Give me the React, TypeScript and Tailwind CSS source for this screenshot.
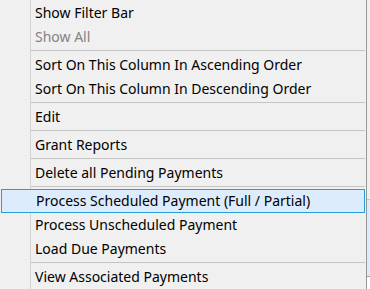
import React from 'react';

type Entry =
  | { kind: 'item'; label: string; disabled?: boolean; active?: boolean }
  | { kind: 'sep' };

const entries: Entry[] = [
  { kind: 'item', label: 'Show Filter Bar' },
  { kind: 'item', label: 'Show All', disabled: true },
  { kind: 'sep' },
  { kind: 'item', label: 'Sort On This Column In Ascending Order' },
  { kind: 'item', label: 'Sort On This Column In Descending Order' },
  { kind: 'sep' },
  { kind: 'item', label: 'Edit' },
  { kind: 'sep' },
  { kind: 'item', label: 'Grant Reports' },
  { kind: 'sep' },
  { kind: 'item', label: 'Delete all Pending Payments' },
  { kind: 'sep' },
  { kind: 'item', label: 'Process Scheduled Payment (Full / Partial)', active: true },
  { kind: 'item', label: 'Process Unscheduled Payment' },
  { kind: 'item', label: 'Load Due Payments' },
  { kind: 'sep' },
  { kind: 'item', label: 'View Associated Payments' },
];

const App: React.FC = () => {
  return (
    <div
      className="w-[370px] h-[289px] flex overflow-hidden bg-[#f0f0f0]"
      style={{ fontFamily: '"Noto Sans", "Open Sans", sans-serif' }}
    >
      <div className="w-[367px] h-full pt-px border-r border-[#979797] bg-[#f0f0f0] bg-[linear-gradient(to_right,transparent_30px,#d5d5d5_30px,#d5d5d5_31px,transparent_31px)]">
        {entries.map((e, i) =>
          e.kind === 'sep' ? (
            <div key={i} className="h-[4px] pt-px">
              <div className="ml-[31px] mr-[1px] h-px bg-[#c5c5c5]" />
            </div>
          ) : (
            <div
              key={i}
              className={
                'mx-px h-[24px] flex items-center pl-[34px] text-[14px] leading-none whitespace-nowrap ' +
                (e.active ? 'bg-[#dcecfc] border border-[#26a0da] pl-[33px] ' : '') +
                (e.disabled ? 'text-[#838383]' : 'text-black')
              }
            >
              {e.label}
            </div>
          )
        )}
      </div>
      <div className="flex-1 flex flex-col bg-white">
        <div className="h-[200px] bg-[#f0f0f0] border-b border-[#c5c5c5]" />
        <div className="h-[77px] bg-[#dcecfc] border-b border-[#a0a0a0]" />
        <div className="flex-1 bg-white" />
      </div>
    </div>
  );
};

export default App;
